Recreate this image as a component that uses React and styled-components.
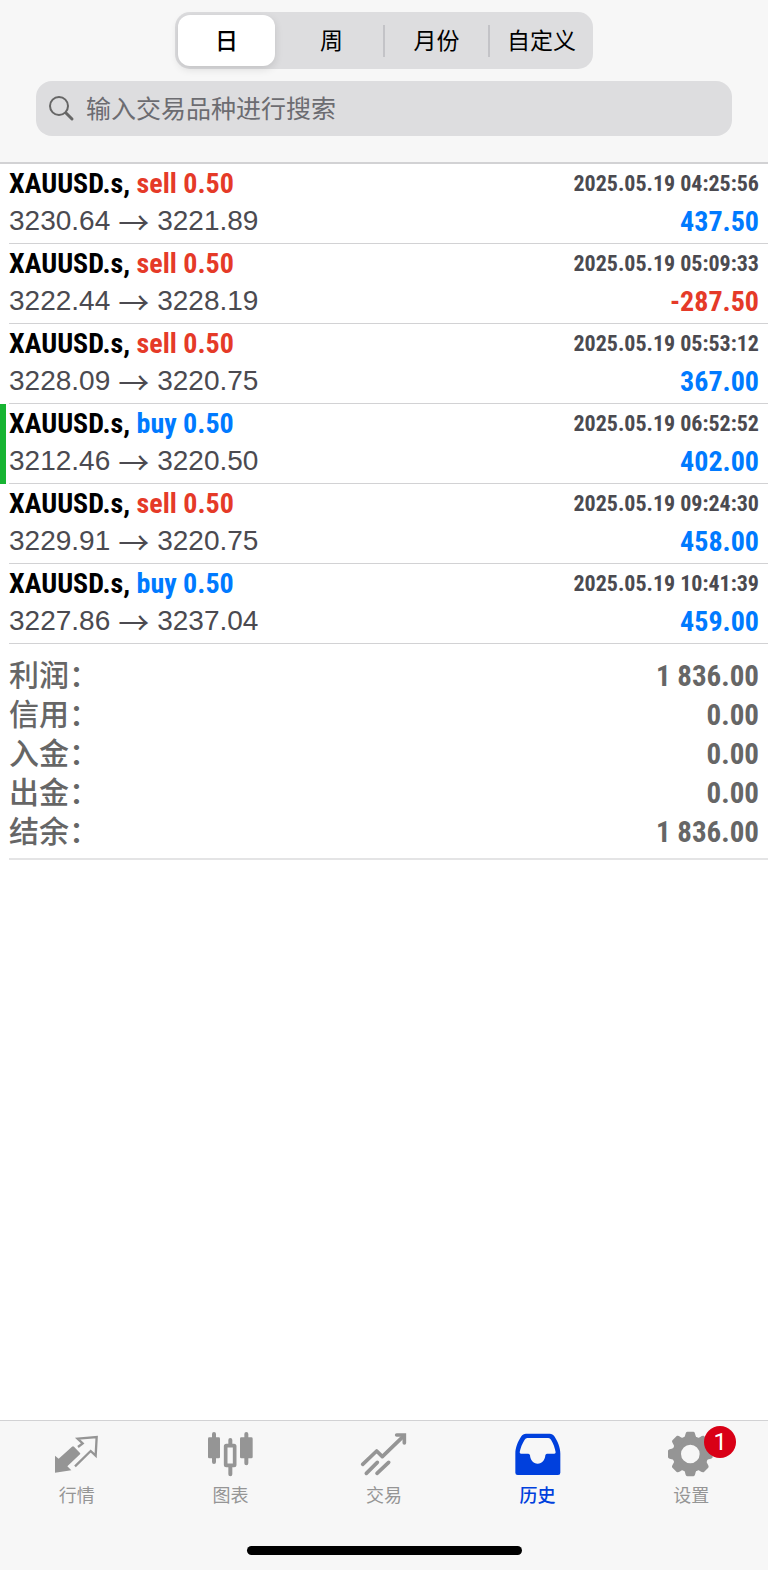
import React, { useState } from 'react'
import styled, { createGlobalStyle } from 'styled-components'

const theme = {
  colors: {
    bar: '#f7f7f7',
    control: '#dddddf',
    line: '#d2d2d4',
    red: '#e53a28',
    blue: '#007aff',
    navy: '#0040dd',
    green: '#17b432',
    gray1: '#4b4a50',
    gray2: '#666666',
    gray3: '#959595',
  },
  fonts: {
    base: '"Liberation Sans", "Noto Sans CJK SC", sans-serif',
    cjk: '"Noto Sans CJK SC", sans-serif',
    narrow: '"Roboto Condensed", Roboto, sans-serif',
  },
}

const GlobalStyle = createGlobalStyle`
  * {
    box-sizing: border-box;
  }
  body {
    margin: 0;
    background: #fff;
    font-family: ${theme.fonts.base};
  }
`

const Page = styled.div`
  display: flex;
  flex-direction: column;
  min-height: 100vh;
`

const Header = styled.header`
  display: flex;
  flex-direction: column;
  align-items: center;
  gap: 12px;
  padding: 12px 36px 26px;
  background: ${theme.colors.bar};
  border-bottom: 2px solid ${theme.colors.line};
`

const Segments = styled.div`
  display: flex;
  align-items: center;
  width: 418px;
  max-width: 100%;
  height: 57px;
  padding: 3px;
  border-radius: 15px;
  background: ${theme.colors.control};
`

const Segment = styled.button`
  flex: 1;
  height: 51px;
  padding: 0 0 3px;
  border: 0;
  border-radius: 12px;
  background: ${(props) => (props.$active ? '#fff' : 'transparent')};
  box-shadow: ${(props) =>
    props.$active ? '0 3px 8px rgba(0, 0, 0, 0.12)' : 'none'};
  color: #000;
  font-family: ${theme.fonts.cjk};
  font-size: 23px;
  font-weight: ${(props) => (props.$active ? 500 : 400)};
  line-height: 48px;
  white-space: nowrap;
`

const Divider = styled.span`
  width: 2px;
  height: 32px;
  margin: 0 3px;
  background: ${(props) => (props.$hidden ? 'transparent' : '#c3c3c7')};
`

const Search = styled.label`
  display: flex;
  align-items: center;
  gap: 11px;
  width: 100%;
  height: 55px;
  padding: 0 12px;
  border-radius: 16px;
  background: ${theme.colors.control};
  color: ${theme.colors.gray2};
  input {
    flex: 1;
    min-width: 0;
    padding: 0 0 3px;
    border: 0;
    outline: 0;
    background: transparent;
    font-family: ${theme.fonts.cjk};
    font-size: 25px;
    line-height: 36px;
  }
  input::placeholder {
    color: #6c6c71;
    opacity: 1;
  }
`

const Content = styled.main`
  flex: 1;
`

const Deals = styled.ul`
  margin: 0;
  padding: 0;
  list-style: none;
`

const DealItem = styled.li`
  position: relative;
  padding-left: 9px;
  &::before {
    content: '';
    position: absolute;
    left: 0;
    top: 0;
    bottom: 0;
    width: 6px;
    background: ${(props) => (props.$marked ? theme.colors.green : 'transparent')};
  }
`

const DealBody = styled.div`
  height: 80px;
  padding-right: 9px;
  border-bottom: 1px solid ${theme.colors.line};
`

const Line = styled.div`
  display: flex;
  justify-content: space-between;
  align-items: center;
  height: 38px;
`

const Symbol = styled.span`
  color: #000;
  font-family: ${theme.fonts.narrow};
  font-size: 28px;
  font-weight: bold;
`

const Side = styled.span`
  color: ${(props) => (props.$side === 'buy' ? theme.colors.blue : theme.colors.red)};
`

const Time = styled.time`
  color: ${theme.colors.gray1};
  font-family: ${theme.fonts.narrow};
  font-size: 22px;
  font-weight: bold;
`

const Prices = styled.span`
  display: flex;
  align-items: center;
  gap: 8px;
  color: ${theme.colors.gray1};
  font-size: 28px;
  line-height: 38px;
`

const Arrow = styled.span`
  font-family: ${theme.fonts.cjk};
  font-size: 31px;
  line-height: 36px;
`

const Profit = styled.span`
  color: ${(props) => (props.$negative ? theme.colors.red : theme.colors.blue)};
  font-family: ${theme.fonts.narrow};
  font-size: 28px;
  font-weight: bold;
`

const Summary = styled.dl`
  margin: 0 0 0 9px;
  padding: 12px 9px 7px 0;
  border-bottom: 2px solid #e4e4e5;
  color: ${theme.colors.gray2};
  div {
    display: flex;
    justify-content: space-between;
    align-items: center;
    height: 39px;
  }
  dt {
    font-size: 30px;
    font-weight: 500;
    line-height: 39px;
  }
  dd {
    margin: 0;
    font-family: ${theme.fonts.narrow};
    font-size: 29px;
    font-weight: bold;
  }
`

const Footer = styled.footer`
  display: flex;
  flex-direction: column;
  align-items: center;
  justify-content: space-between;
  height: 150px;
  padding-bottom: 15px;
  border-top: 1px solid ${theme.colors.line};
  background: ${theme.colors.bar};
`

const Tabs = styled.nav`
  display: flex;
  width: 100%;
  padding-top: 9px;
`

const Tab = styled.a`
  flex: 1;
  display: flex;
  flex-direction: column;
  align-items: center;
  gap: 3px;
  color: ${(props) => (props.$active ? theme.colors.navy : theme.colors.gray3)};
  font-family: ${theme.fonts.cjk};
  font-size: 18px;
  font-weight: ${(props) => (props.$active ? 500 : 400)};
  line-height: 26px;
  text-decoration: none;
`

const TabIcon = styled.span`
  position: relative;
  height: 48px;
  svg {
    display: block;
  }
`

const Badge = styled.span`
  position: absolute;
  top: -4px;
  left: 37px;
  width: 32px;
  height: 32px;
  border-radius: 50%;
  background: #d90016;
  color: #fff;
  font-family: Roboto, sans-serif;
  font-size: 24px;
  line-height: 32px;
  text-align: center;
`

const HomeBar = styled.div`
  width: 275px;
  height: 9px;
  border-radius: 5px;
  background: #000;
`

const Svg = ({ children }) => (
  <svg width="48" height="48" viewBox="0 0 144 144" fill="none" aria-hidden="true">
    {children}
  </svg>
)

const QuotesIcon = () => (
  <Svg>
    <path d="M6 128V77l11 9 40-36q3-3 6 0l18 19q2 2 0 4l-38 36 12 12z" fill="currentColor" />
    <path
      d="M75 51l14-11-15-14 57-5-3 56-15-14-47 46"
      stroke="currentColor"
      strokeWidth="7"
      strokeLinejoin="miter"
    />
  </Svg>
)

const ChartIcon = () => (
  <Svg>
    <g stroke="currentColor" strokeWidth="12" strokeLinecap="round">
      <path d="M24 12v84M121 12v88M73 30v14M73 112v21" />
      <rect x="59" y="47" width="27" height="59" strokeWidth="11" rx="2" />
    </g>
    <rect x="6" y="22" width="36" height="63" rx="4" fill="currentColor" />
    <rect x="102" y="22" width="38" height="63" rx="4" fill="currentColor" />
  </Svg>
)

const TradeIcon = () => (
  <Svg>
    <g stroke="currentColor" strokeWidth="11">
      <path d="M8 103l42-40 17 17 62-60" strokeLinecap="round" strokeLinejoin="round" />
      <path d="M110 15h23v24" strokeLinecap="round" />
      <path d="M19 130l33-33M51 130l35-33" strokeLinecap="round" />
    </g>
  </Svg>
)

const HistoryIcon = () => (
  <Svg>
    <path
      d="M36 11h71c6 0 11 3 14 8 10 15 18 34 18 52v57q0 7-7 7H11q-7 0-7-7V71c0-18 8-37 18-52 3-5 8-8 14-8zM40 24q-5 0-8 5c-7 11-13 25-15 38q0 4 4 4h22q4 0 5 5c1 14 10 25 23 25s22-11 23-25q1-5 5-5h22q4 0 4-4c-2-13-7-27-14-38q-3-5-8-5z"
      fill="currentColor"
      fillRule="evenodd"
    />
  </Svg>
)

const SettingsIcon = () => (
  <Svg>
    <circle cx="70" cy="72" r="41" stroke="currentColor" strokeWidth="26" />
    {[0, 45, 90, 135, 180, 225, 270, 315].map((angle) => (
      <path
        key={angle}
        d="M50 24C56 20 54 5 61 5h18c7 0 5 15 11 19v6H50z"
        fill="currentColor"
        transform={`rotate(${angle} 70 72)`}
      />
    ))}
  </Svg>
)

const SearchIcon = () => (
  <svg width="27" height="27" viewBox="0 0 27 27" fill="none" aria-hidden="true">
    <g stroke="currentColor" strokeLinecap="round">
      <circle cx="11" cy="11" r="9" strokeWidth="2" />
      <path d="M18 18l6 6" strokeWidth="3" />
    </g>
  </svg>
)

const periods = ['日', '周', '月份', '自定义']

const deals = [
  { side: 'sell', time: '2025.05.19 04:25:56', open: '3230.64', close: '3221.89', profit: '437.50' },
  { side: 'sell', time: '2025.05.19 05:09:33', open: '3222.44', close: '3228.19', profit: '-287.50' },
  { side: 'sell', time: '2025.05.19 05:53:12', open: '3228.09', close: '3220.75', profit: '367.00' },
  { side: 'buy', time: '2025.05.19 06:52:52', open: '3212.46', close: '3220.50', profit: '402.00', marked: true },
  { side: 'sell', time: '2025.05.19 09:24:30', open: '3229.91', close: '3220.75', profit: '458.00' },
  { side: 'buy', time: '2025.05.19 10:41:39', open: '3227.86', close: '3237.04', profit: '459.00' },
]

const totals = [
  ['利润：', '1 836.00'],
  ['信用：', '0.00'],
  ['入金：', '0.00'],
  ['出金：', '0.00'],
  ['结余：', '1 836.00'],
]

const tabs = [
  { label: '行情', icon: QuotesIcon },
  { label: '图表', icon: ChartIcon },
  { label: '交易', icon: TradeIcon },
  { label: '历史', icon: HistoryIcon, active: true },
  { label: '设置', icon: SettingsIcon, badge: 1 },
]

function Deal({ side, time, open, close, profit, marked }) {
  return (
    <DealItem $marked={marked}>
      <DealBody>
        <Line>
          <Symbol>
            XAUUSD.s, <Side $side={side}>{side} 0.50</Side>
          </Symbol>
          <Time>{time}</Time>
        </Line>
        <Line>
          <Prices>
            <span>{open}</span>
            <Arrow>→</Arrow>
            <span>{close}</span>
          </Prices>
          <Profit $negative={profit.startsWith('-')}>{profit}</Profit>
        </Line>
      </DealBody>
    </DealItem>
  )
}

export default function App() {
  const [period, setPeriod] = useState(0)

  return (
    <Page>
      <GlobalStyle />
      <Header>
        <Segments role="group">
          {periods.map((name, i) => (
            <React.Fragment key={name}>
              {i > 0 && <Divider $hidden={period === i || period === i - 1} />}
              <Segment
                type="button"
                $active={period === i}
                aria-pressed={period === i}
                onClick={() => setPeriod(i)}
              >
                {name}
              </Segment>
            </React.Fragment>
          ))}
        </Segments>
        <Search>
          <SearchIcon />
          <input type="text" placeholder="输入交易品种进行搜索" />
        </Search>
      </Header>
      <Content>
        <Deals>
          {deals.map((deal) => (
            <Deal key={deal.time} {...deal} />
          ))}
        </Deals>
        <Summary>
          {totals.map(([label, value]) => (
            <div key={label}>
              <dt>{label}</dt>
              <dd>{value}</dd>
            </div>
          ))}
        </Summary>
      </Content>
      <Footer>
        <Tabs>
          {tabs.map(({ label, icon: Icon, active, badge }) => (
            <Tab key={label} href="#" $active={active}>
              <TabIcon>
                <Icon />
                {badge && <Badge>{badge}</Badge>}
              </TabIcon>
              {label}
            </Tab>
          ))}
        </Tabs>
        <HomeBar />
      </Footer>
    </Page>
  )
}
